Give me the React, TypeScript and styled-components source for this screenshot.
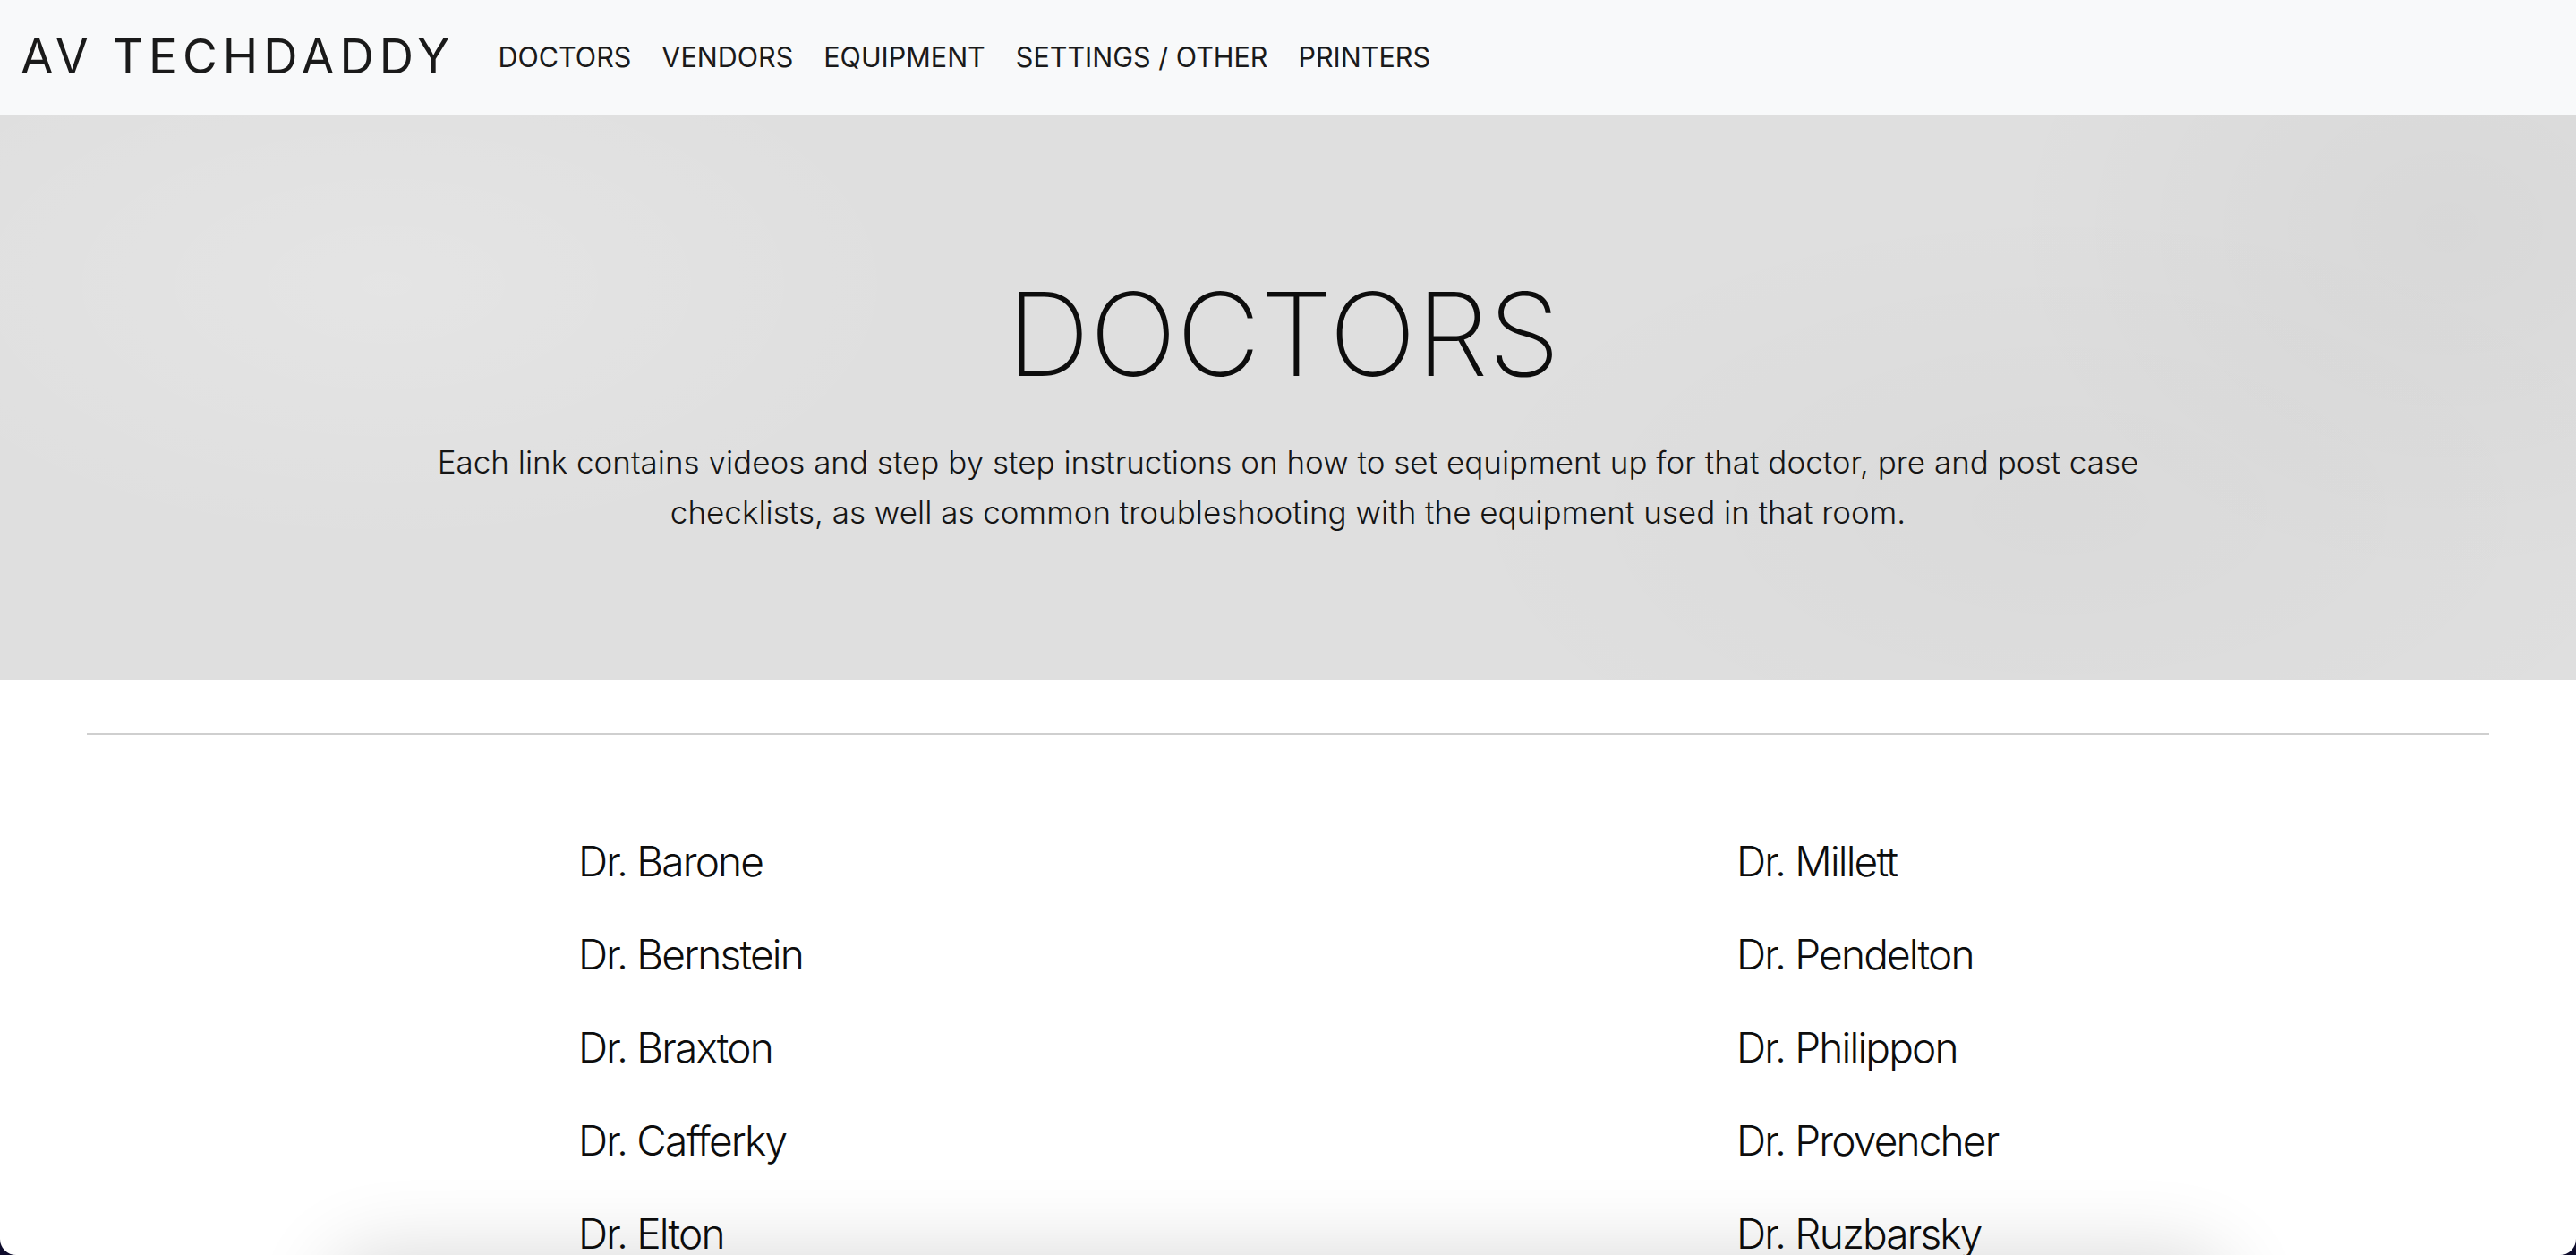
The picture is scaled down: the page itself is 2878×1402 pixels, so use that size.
import React from 'react';
import styled, { createGlobalStyle } from 'styled-components';

const GlobalStyle = createGlobalStyle`
  html, body {
    margin: 0;
    padding: 0;
    background: #0e0c2c;
  }
  body {
    font-family: Inter, "Noto Sans", "Liberation Sans", sans-serif;
    color: #111;
    -webkit-font-smoothing: antialiased;
  }
  * {
    box-sizing: border-box;
  }
`;

const Page = styled.div`
  position: relative;
  height: 1402px;
  overflow: hidden;
  background: #ffffff;
  border-radius: 0 0 18px 18px;
`;

const NavBar = styled.nav`
  height: 128px;
  display: flex;
  align-items: center;
  padding-left: 23px;
  background: #f8f9fa;
`;

const Brand = styled.a`
  font-size: 53px;
  line-height: 1.2;
  font-weight: 400;
  letter-spacing: 0.115em;
  color: #1a1a1a;
  margin-right: 31px;
  white-space: nowrap;
`;

const NavList = styled.ul`
  display: flex;
  list-style: none;
  margin: 0;
  padding: 0;
`;

const NavLink = styled.a`
  display: block;
  padding: 0 17px;
  font-size: 30.5px;
  line-height: 1.2;
  font-weight: 400;
  color: #1a1a1a;
  white-space: nowrap;
`;

const Hero = styled.header`
  height: 632px;
  padding-top: 170px;
  text-align: center;
  background:
    radial-gradient(ellipse 600px 300px at 15% 30%, rgba(255, 255, 255, 0.18), transparent),
    radial-gradient(ellipse 700px 350px at 80% 70%, rgba(0, 0, 0, 0.025), transparent),
    radial-gradient(ellipse 500px 400px at 95% 20%, rgba(0, 0, 0, 0.03), transparent),
    #dfdfdf;
`;

const Title = styled.h1`
  margin: 0 0 0 -10px;
  font-size: 129px;
  line-height: 150px;
  font-weight: 200;
  color: #0d0d0d;
`;

const Lead = styled.p`
  margin: 40px auto 0;
  max-width: 1960px;
  font-size: 35px;
  line-height: 56px;
  font-weight: 300;
  color: #151515;
`;

const Divider = styled.hr`
  margin: 59px 97px 0;
  border: none;
  border-top: 2px solid #cfcfcf;
`;

const DoctorGrid = styled.ul`
  display: grid;
  grid-template-columns: 1294px auto;
  grid-auto-flow: column;
  grid-template-rows: repeat(5, 104px);
  list-style: none;
  margin: 89px 0 0;
  padding: 0 0 0 646px;
`;

const DoctorLink = styled.a`
  display: block;
  font-size: 46px;
  line-height: 104px;
  font-weight: 300;
  letter-spacing: -0.04em;
  color: #0d0d0d;
  white-space: nowrap;
`;

const BottomShadow = styled.div`
  position: absolute;
  left: 380px;
  right: 400px;
  top: 1412px;
  height: 200px;
  border-radius: 40px;
  box-shadow: 0 0 90px 10px rgba(0, 0, 0, 0.16);
`;

const navItems = ['DOCTORS', 'VENDORS', 'EQUIPMENT', 'SETTINGS / OTHER', 'PRINTERS'];

const doctors = [
  'Dr. Barone',
  'Dr. Bernstein',
  'Dr. Braxton',
  'Dr. Cafferky',
  'Dr. Elton',
  'Dr. Millett',
  'Dr. Pendelton',
  'Dr. Philippon',
  'Dr. Provencher',
  'Dr. Ruzbarsky',
];

export default function App() {
  return (
    <>
      <GlobalStyle />
      <Page>
        <NavBar>
          <Brand>AV TECHDADDY</Brand>
          <NavList>
            {navItems.map(item => (
              <li key={item}>
                <NavLink>{item}</NavLink>
              </li>
            ))}
          </NavList>
        </NavBar>

        <Hero>
          <Title>DOCTORS</Title>
          <Lead>
            Each link contains videos and step by step instructions on how to set equipment up for that doctor, pre and
            post case checklists, as well as common troubleshooting with the equipment used in that room.
          </Lead>
        </Hero>

        <Divider />

        <DoctorGrid>
          {doctors.map(name => (
            <li key={name}>
              <DoctorLink>{name}</DoctorLink>
            </li>
          ))}
        </DoctorGrid>

        <BottomShadow />
      </Page>
    </>
  );
}
